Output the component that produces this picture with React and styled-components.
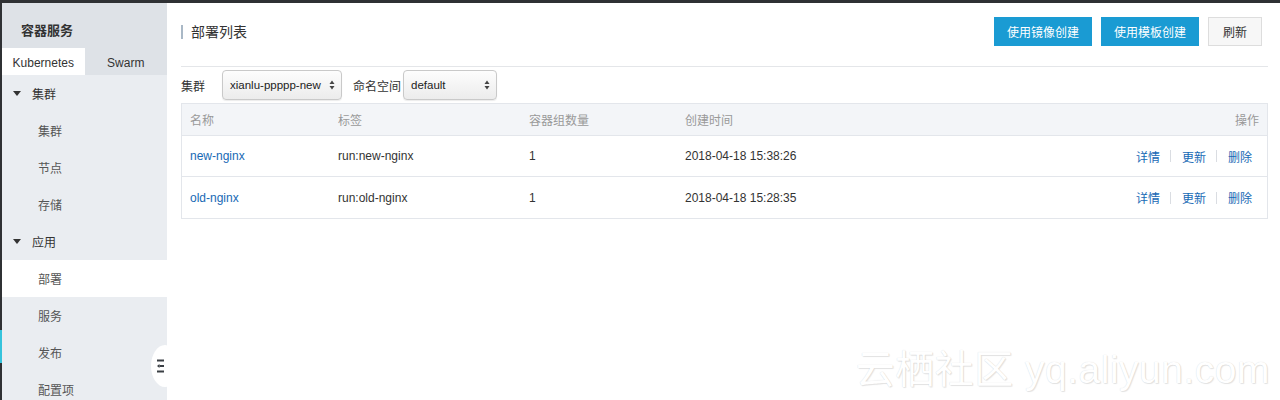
import React from "react";
import styled, { createGlobalStyle } from "styled-components";

const Global = createGlobalStyle`
  html, body { margin: 0; padding: 0; background: #fff; }
  body {
    font-family: "Liberation Sans", "Noto Sans CJK SC", sans-serif;
    font-size: 12px;
    color: #333;
    overflow: hidden;
  }
  * { box-sizing: border-box; }
`;

const Page = styled.div`
  position: relative;
  width: 1280px;
  height: 400px;
  display: flex;
  flex-direction: column;
  overflow: hidden;
`;

const TopBar = styled.div`
  height: 3px;
  background: #2f3134;
  flex: none;
`;

const Body = styled.div`
  flex: 1;
  display: flex;
  min-height: 0;
`;

const Rail = styled.div`
  width: 2px;
  background: #2f3134;
  display: flex;
  flex-direction: column;
  padding-top: 327px;
`;

const RailMark = styled.div`
  height: 33px;
  flex: none;
  background: #35c3dc;
`;

const Sidebar = styled.aside`
  position: relative;
  width: 165px;
  background: #eaedf1;
  display: flex;
  flex-direction: column;
`;

const SideHeader = styled.div`
  flex: none;
  height: 45px;
  background: #dee2e7;
  display: flex;
  align-items: center;
  padding: 8px 0 0 19px;
  font-size: 13px;
  font-weight: bold;
  color: #333;
`;

const Tabs = styled.div`
  flex: none;
  display: flex;
  height: 27px;
  background: #dee2e7;
`;

const Tab = styled.div`
  flex: 1;
  display: flex;
  align-items: center;
  justify-content: center;
  background: ${(p) => (p.$active ? "#fff" : "transparent")};
  color: #333;
  font-size: 12px;
  padding-top: 2px;
`;

const Group = styled.div`
  flex: none;
  height: 37px;
  display: flex;
  align-items: center;
  padding-left: 11px;
  gap: 11px;
  font-size: 12px;
  color: #333;
`;

const Caret = styled.span`
  width: 0;
  height: 0;
  border-left: 4px solid transparent;
  border-right: 4px solid transparent;
  border-top: 5px solid #333;
`;

const Item = styled.div`
  flex: none;
  height: 37px;
  display: flex;
  align-items: center;
  padding-left: 36px;
  font-size: 12px;
  color: #555;
  background: ${(p) => (p.$active ? "#fff" : "transparent")};
`;

const Handle = styled.div`
  position: absolute;
  right: -12px;
  top: 342px;
  width: 28px;
  height: 42px;
  border-radius: 50%;
  background: #fff;
  display: flex;
  align-items: center;
  padding-left: 6px;
`;

const Main = styled.main`
  flex: 1;
  padding: 14px 12px 0 14px;
  display: flex;
  flex-direction: column;
`;

const HeaderRow = styled.div`
  display: flex;
  align-items: center;
  justify-content: space-between;
  padding-bottom: 20px;
  border-bottom: 1px solid #e4e6e9;
`;

const Title = styled.h1`
  margin: 0;
  font-size: 14px;
  font-weight: normal;
  color: #333;
  border-left: 2px solid #a9b8c6;
  padding-left: 8px;
  line-height: 14px;
`;

const Buttons = styled.div`
  display: flex;
  gap: 9px;
  padding-right: 6px;
`;

const Button = styled.button`
  height: 29px;
  min-width: ${(p) => (p.$primary ? "97px" : "54px")};
  padding: 0 12px;
  font-family: inherit;
  font-size: 12px;
  border-radius: 0;
  cursor: pointer;
  border: 1px solid ${(p) => (p.$primary ? "#1a9bd3" : "#ddd")};
  background: ${(p) => (p.$primary ? "#1a9bd3" : "#f7f7f7")};
  color: ${(p) => (p.$primary ? "#fff" : "#333")};
`;

const FilterRow = styled.div`
  display: flex;
  align-items: center;
  padding: 3px 0 3px 0;
`;

const Label = styled.span`
  font-size: 12px;
  color: #333;
  margin-right: ${(p) => p.$gap}px;
`;

const Select = styled.div`
  width: ${(p) => p.$w}px;
  height: 30px;
  border: 1px solid #c9c9c9;
  border-radius: 4px;
  background: linear-gradient(#fdfdfd, #ececec);
  box-shadow: 0 1px 1px rgba(0, 0, 0, 0.08);
  display: flex;
  align-items: center;
  justify-content: space-between;
  padding: 0 6px 0 7px;
  font-size: 11.5px;
  color: #222;
  margin-right: ${(p) => p.$mr || 0}px;
`;

const Table = styled.div`
  border: 1px solid #e3e6eb;
  display: grid;
  grid-template-columns: 148px 191px 156px 1fr auto;
`;

const Th = styled.div`
  height: 32px;
  background: #f3f5f8;
  display: flex;
  align-items: center;
  justify-content: ${(p) => (p.$right ? "flex-end" : "flex-start")};
  padding: 0 ${(p) => (p.$right ? 8 : 0)}px 0 8px;
  color: #999;
  font-size: 12px;
  border-bottom: 1px solid #e3e6eb;
`;

const Td = styled.div`
  height: 41px;
  display: flex;
  align-items: center;
  justify-content: ${(p) => (p.$right ? "flex-end" : "flex-start")};
  padding: 0 ${(p) => (p.$right ? 15 : 0)}px 0 8px;
  font-size: 12px;
  color: #333;
  border-bottom: ${(p) => (p.$last ? "none" : "1px solid #e3e6eb")};
`;

const Link = styled.a`
  color: #1769b5;
  text-decoration: none;
  cursor: pointer;
`;

const Sep = styled.span`
  width: 1px;
  height: 12px;
  background: #dadde2;
  margin: 0 11px 0 10px;
`;

const Watermark = styled.div`
  position: absolute;
  right: 10px;
  bottom: 6px;
  font-size: 39px;
  color: #fff;
  letter-spacing: 0.5px;
  text-shadow: 0 0 1px rgba(0, 0, 0, 0.16), 1px 1px 1px rgba(0, 0, 0, 0.1);
  font-family: "Liberation Sans", "Noto Sans CJK SC", sans-serif;
  pointer-events: none;
`;

const Arrows = () => (
  <svg width="6" height="10" viewBox="0 0 6 10">
    <path d="M3 0.5 L5.5 4 L0.5 4 Z" fill="#444" />
    <path d="M3 9.5 L5.5 6 L0.5 6 Z" fill="#444" />
  </svg>
);

const rows = [
  { name: "new-nginx", label: "run:new-nginx", count: 1, time: "2018-04-18 15:38:26" },
  { name: "old-nginx", label: "run:old-nginx", count: 1, time: "2018-04-18 15:28:35" },
];

export default function App() {
  return (
    <Page>
      <Global />
      <TopBar />
      <Body>
        <Rail>
          <RailMark />
        </Rail>
        <Sidebar>
          <SideHeader>容器服务</SideHeader>
          <Tabs>
            <Tab $active>Kubernetes</Tab>
            <Tab>Swarm</Tab>
          </Tabs>
          <Group>
            <Caret />
            集群
          </Group>
          <Item>集群</Item>
          <Item>节点</Item>
          <Item>存储</Item>
          <Group>
            <Caret />
            应用
          </Group>
          <Item $active>部署</Item>
          <Item>服务</Item>
          <Item>发布</Item>
          <Item>配置项</Item>
          <Handle>
            <svg width="7" height="14" viewBox="0 0 7 14">
              <rect x="0" y="0.5" width="7" height="2" fill="#3a3f44" />
              <rect x="2.5" y="6" width="4.5" height="2" fill="#3a3f44" />
              <path d="M0 7 L2.5 5 L2.5 9 Z" fill="#3a3f44" />
              <rect x="0" y="11.5" width="7" height="2" fill="#3a3f44" />
            </svg>
          </Handle>
        </Sidebar>
        <Main>
          <HeaderRow>
            <Title>部署列表</Title>
            <Buttons>
              <Button $primary>使用镜像创建</Button>
              <Button $primary>使用模板创建</Button>
              <Button>刷新</Button>
            </Buttons>
          </HeaderRow>
          <FilterRow>
            <Label $gap={17}>集群</Label>
            <Select $w={120} $mr={11}>
              xianlu-ppppp-new
              <Arrows />
            </Select>
            <Label $gap={2}>命名空间</Label>
            <Select $w={94}>
              default
              <Arrows />
            </Select>
          </FilterRow>
          <Table>
            <Th>名称</Th>
            <Th>标签</Th>
            <Th>容器组数量</Th>
            <Th>创建时间</Th>
            <Th $right>操作</Th>
            {rows.map((r, i) => {
              const last = i === rows.length - 1;
              return (
                <React.Fragment key={r.name}>
                  <Td $last={last}>
                    <Link>{r.name}</Link>
                  </Td>
                  <Td $last={last}>{r.label}</Td>
                  <Td $last={last}>{r.count}</Td>
                  <Td $last={last}>{r.time}</Td>
                  <Td $last={last} $right>
                    <Link>详情</Link>
                    <Sep />
                    <Link>更新</Link>
                    <Sep />
                    <Link>删除</Link>
                  </Td>
                </React.Fragment>
              );
            })}
          </Table>
        </Main>
      </Body>
      <Watermark>云栖社区 yq.aliyun.com</Watermark>
    </Page>
  );
}
